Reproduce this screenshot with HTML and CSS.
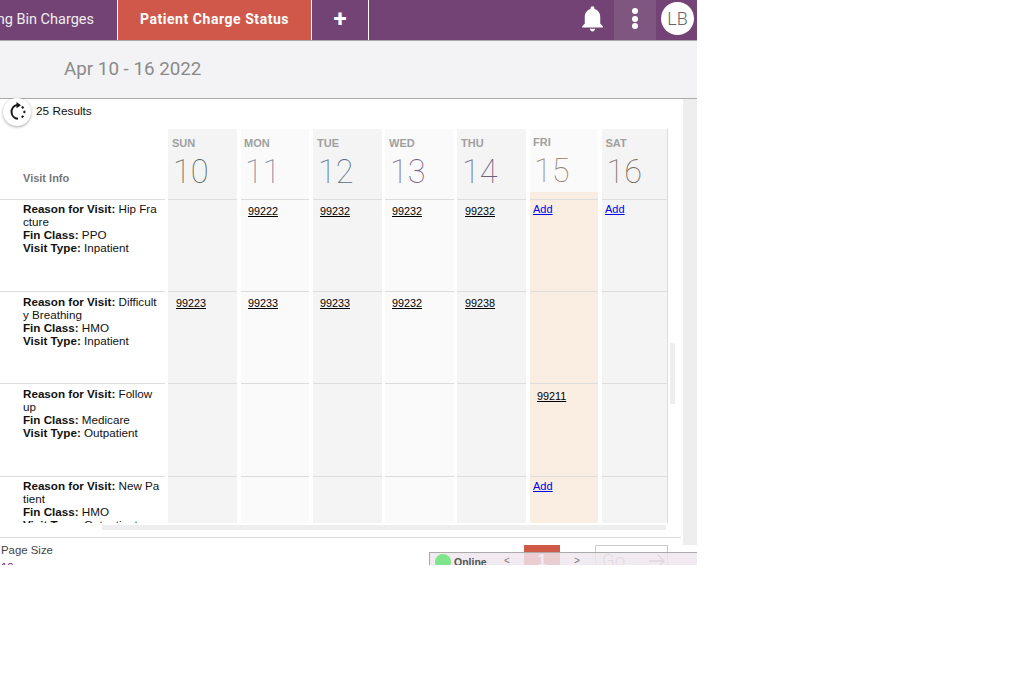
FILE: index.html
```html
<!DOCTYPE html>
<html lang="en">
<head>
  <meta charset="UTF-8">
  <title>Patient Charge Status</title>
  <link rel="stylesheet" href="styles.css">
</head>
<body>
<div class="app">

  <!-- TOP NAV -->
  <nav class="topnav">
    <a class="tab tab-cut">ng Bin Charges</a>
    <a class="tab tab-active">Patient Charge Status</a>
    <a class="tab tab-add">+</a>
    <div class="nav-right">
      <svg class="bell" viewBox="0 0 24 24"><path fill="#fff" d="M12 22c1.1 0 2-.9 2-2h-4c0 1.1.9 2 2 2zm6-6v-5c0-3.07-1.63-5.64-4.5-6.32V4c0-.83-.67-1.5-1.5-1.5s-1.5.67-1.5 1.5v.68C7.64 5.36 6 7.92 6 11v5l-2 2v1h16v-1l-2-2z"/></svg>
      <div class="more"><i></i><i></i><i></i></div>
      <div class="avatar">LB</div>
    </div>
  </nav>

  <div class="toolbar">Apr 10 - 16 2022</div>

  <div class="body">
    <main class="content">
      <div class="results">
        <button class="refresh">
          <svg viewBox="0 0 20 20" width="20" height="20">
            <path d="M11 16.8A7 7 0 0 1 10 3" fill="none" stroke="#1a1a1a" stroke-width="2"/>
            <path d="M10 3A7 7 0 0 1 14 16" fill="none" stroke="#1a1a1a" stroke-width="2" stroke-dasharray="2.4 2.6"/>
            <path d="M9.5 0 14 3.2 9.5 6.2z" fill="#1a1a1a"/>
          </svg>
        </button>
        <span>25 Results</span>
      </div>

      <!-- WEEK GRID -->
      <div class="week">
        <div class="info-col">
          <div class="info-head">Visit Info</div>
          <div class="row info"><b>Reason for Visit:</b> Hip Fracture<br><b>Fin Class:</b> PPO<br><b>Visit Type:</b> Inpatient</div>
          <div class="row info info-low"><b>Reason for Visit:</b> Difficulty Breathing<br><b>Fin Class:</b> HMO<br><b>Visit Type:</b> Inpatient</div>
          <div class="row row-tall info info-low"><b>Reason for Visit:</b> Follow up<br><b>Fin Class:</b> Medicare<br><b>Visit Type:</b> Outpatient</div>
          <div class="row info"><b>Reason for Visit:</b> New Patient<br><b>Fin Class:</b> HMO<br><b>Visit Type:</b> Outpatient</div>
        </div>

        <div class="day dark">
          <div class="day-head"><span class="dow">SUN</span><span class="num n10">10</span></div>
          <div class="row"></div>
          <div class="row"><a class="code c8">99223</a></div>
          <div class="row row-tall"></div>
          <div class="row"></div>
        </div>
        <div class="day light w68">
          <div class="day-head"><span class="dow">MON</span><span class="num n11">11</span></div>
          <div class="row"><a class="code">99222</a></div>
          <div class="row"><a class="code">99233</a></div>
          <div class="row row-tall"></div>
          <div class="row"></div>
        </div>
        <div class="day dark gap3">
          <div class="day-head"><span class="dow">TUE</span><span class="num n12">12</span></div>
          <div class="row"><a class="code">99232</a></div>
          <div class="row"><a class="code">99233</a></div>
          <div class="row row-tall"></div>
          <div class="row"></div>
        </div>
        <div class="day light gap3">
          <div class="day-head"><span class="dow">WED</span><span class="num n13">13</span></div>
          <div class="row"><a class="code">99232</a></div>
          <div class="row"><a class="code">99232</a></div>
          <div class="row row-tall"></div>
          <div class="row"></div>
        </div>
        <div class="day dark">
          <div class="day-head"><span class="dow">THU</span><span class="num n14">14</span></div>
          <div class="row"><a class="code c8">99232</a></div>
          <div class="row"><a class="code c8">99238</a></div>
          <div class="row row-tall"></div>
          <div class="row"></div>
        </div>
        <div class="day today w68">
          <div class="day-head"><span class="dow">FRI</span><span class="num n15">15</span></div>
          <div class="today-strip"></div>
          <div class="row"><a class="add">Add</a></div>
          <div class="row"></div>
          <div class="row row-tall"><a class="code code-low">99211</a></div>
          <div class="row"><a class="add">Add</a></div>
        </div>
        <div class="day dark last">
          <div class="day-head"><span class="dow">SAT</span><span class="num n16">16</span></div>
          <div class="row"><a class="add">Add</a></div>
          <div class="row"></div>
          <div class="row row-tall"></div>
          <div class="row"></div>
        </div>
      </div>

      <div class="hscroll"></div>
      <div class="vthumb"></div>

      <footer class="pager-row">
        <div class="page-size">
          <div>Page Size</div>
          <div class="size-val">10</div>
        </div>
        <div class="page-num">1</div>
        <div class="go">
          <span>Go</span>
          <svg class="go-arrow" viewBox="0 0 16 14" width="16" height="14"><path d="M0 7h15M9 1l6 6-6 6" fill="none" stroke="#999" stroke-width="1.4"/></svg>
        </div>
      </footer>
    </main>
    <div class="track"></div>
  </div>

  <!-- ONLINE BAR -->
  <div class="online">
    <i class="dot"></i><b>Online</b>
    <span class="prev">&lt;</span>
    <span class="next">&gt;</span>
  </div>
</div>
</body>
</html>
```

FILE: styles.css
```css
* { box-sizing:border-box; }
html, body { margin:0; padding:0; background:#fff; }
body { font-family:'Liberation Sans',Arial,sans-serif; font-size:12px; color:#111; }

.app {
  position:relative; width:697px; height:565px; overflow:hidden;
  display:flex; flex-direction:column; background:#fff;
}

/* Top nav */
.topnav {
  flex:none; height:41px; display:flex; align-items:stretch;
  background:#744375; border-bottom:1px solid #aaa;
}
.tab {
  display:flex; align-items:center; justify-content:center;
  color:#fff; font-family:Roboto,sans-serif; font-size:14px;
  border-right:1px solid #fff; white-space:nowrap;
}
.tab-cut { width:118px; justify-content:flex-end; padding-right:23px; color:#eee; font-size:14.5px; padding-bottom:2px; }
.tab-active { width:194px; background:#d0584a; font-weight:700; letter-spacing:.55px; padding-bottom:3px; }
.tab-add { width:57px; font-size:24px; font-weight:700; padding-bottom:2px; }
.nav-right { margin-left:auto; display:flex; align-items:stretch; }
.bell { width:31px; height:31px; margin:3px 6px 0 0; }
.more {
  width:42px; background:#7f5680; display:flex; flex-direction:column;
  align-items:center; justify-content:center; gap:1.5px; padding-bottom:3px;
}
.more i { width:6px; height:6px; border-radius:50%; background:#fff; }
.avatar {
  width:33px; height:33px; margin:2px 3px 0 5px; border-radius:50%;
  background:#fff; color:#666; font-family:Roboto,sans-serif; font-size:18px; font-weight:300;
  display:flex; align-items:center; justify-content:center;
}

/* Toolbar */
.toolbar {
  flex:none; height:58px; padding:18px 0 0 64px;
  background:#f3f3f5; border-bottom:1px solid #aaa;
  color:#8a8a8a; font-family:Roboto,sans-serif; font-size:18.8px; line-height:21px;
}

.body { flex:1; display:flex; min-height:0; }
.content { position:relative; width:683px; }
.track { width:14px; height:446px; background:#eee; }

.results { height:30px; display:flex; align-items:center; padding-left:36px; padding-bottom:7px; font-size:11.8px; }
.refresh {
  position:absolute; left:3px; top:-1px; width:28px; height:28px; padding:0;
  border:none; border-radius:50%; background:#fff;
  box-shadow:0 1px 3px rgba(0,0,0,.35);
  display:flex; align-items:center; justify-content:center;
}

/* Week grid */
.week { height:394px; overflow:hidden; display:flex; align-items:flex-start; }
.info-col { width:165px; margin-right:3px; flex:none; }
.info-head {
  height:71px; padding:43px 0 0 23px; border-bottom:1px solid #ddd;
  font-size:11px; font-weight:700; color:#777;
}
.row { height:92px; border-bottom:1px solid #ddd; }
.row-tall { height:93px; }
.info { padding:2px 5px 0 23px; font-size:11.65px; line-height:13px; word-break:break-all; }
.info-low { padding-top:3px; }

.day { flex:none; width:69px; margin-right:4px; height:394px; }
.w68 { width:68px; }
.gap3 { margin-right:3px; }
.dark { background:#f4f4f4; }
.light { background:#fafafa; }
.last { width:66px; margin-right:0; border-right:1px solid #ddd; }
.today { background:#f9eee1; }

.day-head { height:71px; padding:8px 0 0 4px; border-bottom:1px solid #ddd; display:flex; flex-direction:column; }
.w68 .day-head { padding-left:3px; }
.last .day-head { padding-left:3.5px; }
.today .day-head { height:63px; padding-top:7px; background:#fafafa; border-bottom:none; }
.today-strip { height:8px; border-bottom:1px solid #ddd; }
.dow { font-size:11px; font-weight:700; color:#a0a0a0; line-height:13px; }
.num { font-family:Roboto,sans-serif; font-weight:100; font-size:32.5px; line-height:40px; margin-top:2px; padding-left:1px; }
.n10 { color:#56635c; }
.n11 { color:#6b7f96; }
.n12 { color:#566b80; }
.n13 { color:#75607f; }
.n14 { color:#6b6278; }
.n15 { color:#94806c; }
.n16 { color:#786a60; }

.code {
  display:inline-block; margin:4px 0 0 7px; font-size:10.8px; line-height:14px;
  color:#000; text-decoration:underline;
}
.c8 { margin-left:8px; }
.code-low { margin-top:5px; }
.add {
  display:inline-block; margin:2px 0 0 3px; font-size:11px; line-height:14px;
  color:#00e; text-decoration:underline;
}

/* Scrollbars */
.hscroll { height:5px; width:564px; margin:2px 0 0 102px; background:#eee; }
.vthumb { position:absolute; left:670px; top:244px; width:5px; height:61px; background:#eee; }

/* Footer */
.pager-row {
  margin-top:7px; width:681px; border-top:1px solid #ddd;
  display:flex; align-items:flex-start; padding-top:7px;
}
.page-size { width:524px; padding-left:1px; font-size:11.4px; line-height:11px; color:#444; }
.size-val { color:#7a1f7a; margin-top:6px; }
.page-num {
  width:36px; height:34px; background:#cf5a48; color:#fff; font-weight:700; font-size:16px;
  text-align:center; padding-top:7px; line-height:18px;
}
.go {
  width:73px; height:34px; margin-left:35px; border:1px solid #ccc; border-bottom:none;
  padding:4px 0 0 6px; font-family:Roboto,sans-serif; font-weight:300; font-size:18.5px; color:#999;
  display:flex; align-items:flex-start; gap:24px;
}
.go-arrow { margin-top:4px; }

/* Online bar, sits over the pager */
.online {
  position:absolute; left:429px; top:552px; width:268px; height:20px;
  background:rgba(238,230,238,.82); border:1px solid #aaa; border-right:none;
  font-size:10.5px; color:#555;
  display:flex; align-items:flex-start; padding:1px 0 0 5px;
}
.online .dot { width:16px; height:16px; border-radius:50%; background:#7fe58b; margin-right:3px; }
.online b { line-height:16px; }
.online .prev, .online .next { position:absolute; top:2px; color:#777; font-size:10px; }
.online .prev { left:74px; }
.online .next { left:144px; }
```
